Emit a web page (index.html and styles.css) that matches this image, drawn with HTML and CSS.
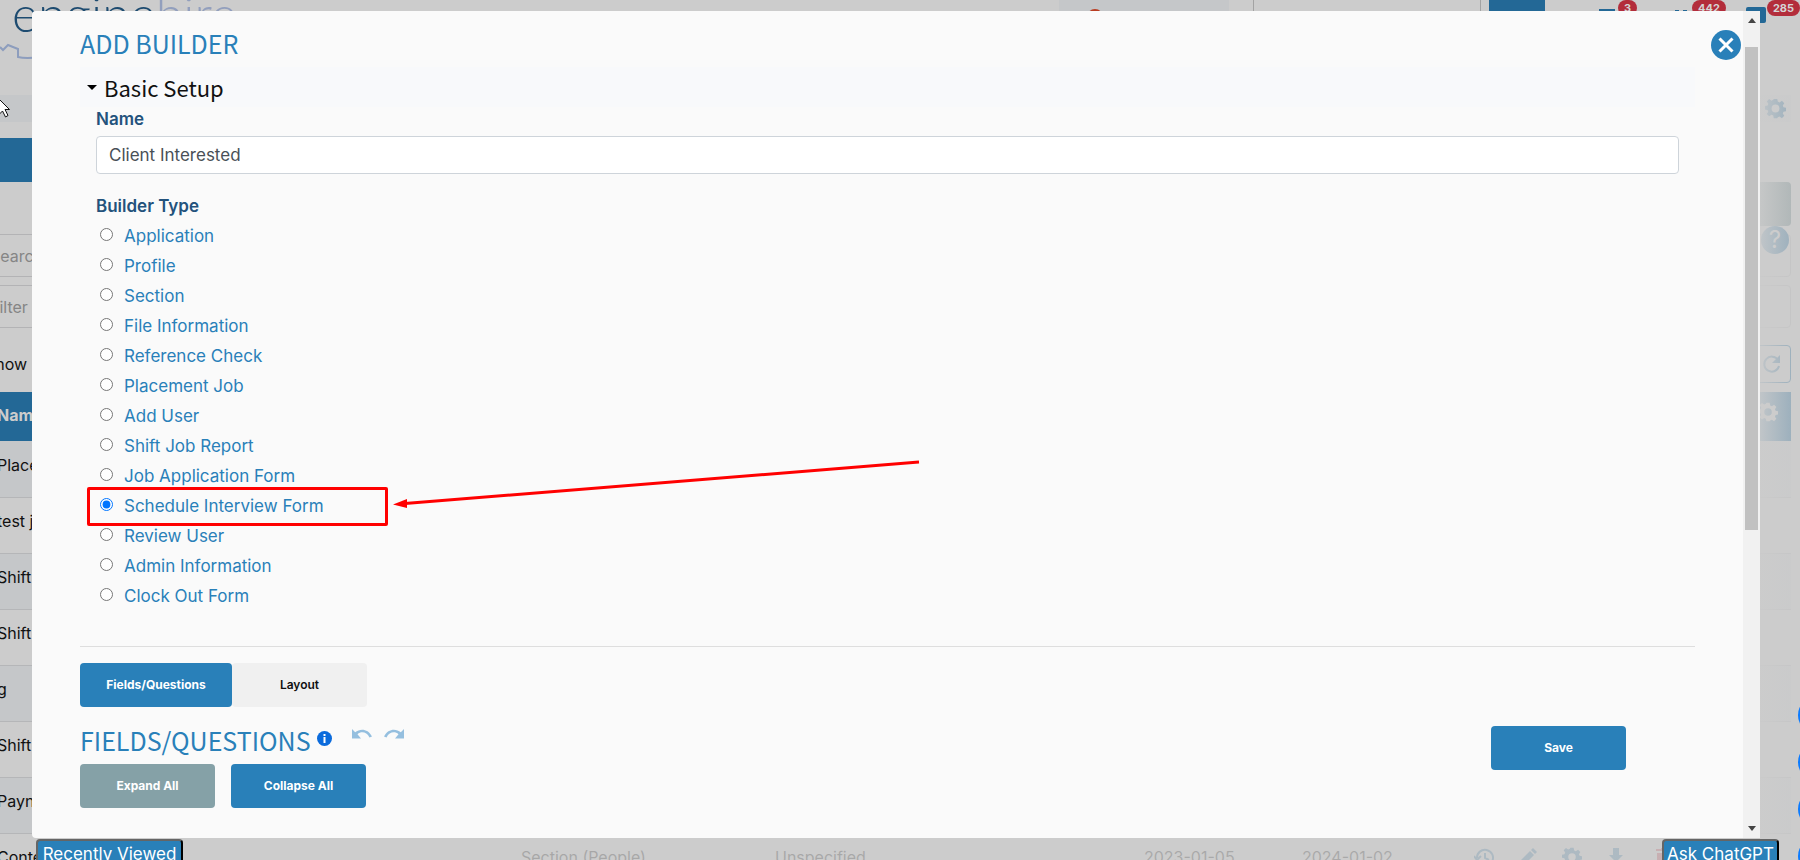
FILE: index.html
```html
<!DOCTYPE html>
<html lang="en">
<head>
<meta charset="utf-8">
<title>Enginehire - Add Builder</title>
<link rel="stylesheet" href="styles.css">
</head>
<body>
<svg class="defs" aria-hidden="true">
  <symbol id="gear" viewBox="0 0 24 24"><path fill="currentColor" fill-rule="evenodd" d="M10 1h4l.6 3.1 2 .9 2.700-1.800 2.700 2.800-1.700 2.600.8 2 3 .6v3.800l-3 .6-.8 2 1.700 2.600-2.700 2.800-2.700-1.800-2 .9L14 23h-4l-.6-3-2-.9-2.700 1.800L2 18.200l1.700-2.600-.8-2-2.900-.6V9.200l3-.6.8-2L2 4l2.700-2.800 2.700 1.800 2-.9zM12 7.500a4.500 4.500 0 1 0 0 9 4.500 4.500 0 0 0 0-9z"/></symbol>
</svg>

<div class="page">
  <header class="top">
    <div class="brand">
      <div class="logo"><span class="logo-dark">engine</span><span class="logo-light">hire</span></div>
      <svg class="skyline" width="40" height="20" viewBox="0 0 40 20" fill="none" stroke="#8d9dbd" stroke-width="2"><path d="M0 4l3 3 5-5 10 4v8q8 2 22 0"/></svg>
    </div>
    <div class="top-tools">
      <div class="notice">
        <svg width="170" height="16" viewBox="0 0 170 16"><circle cx="36" cy="15" r="8" fill="#b93d22"/><circle cx="36" cy="15" r="4" fill="#c5c7c9"/><path stroke="#b93d22" stroke-width="2" d="M58 10v6M100 10v6M108 10v6M127 10v6M142 10v6"/></svg>
      </div>
      <div class="top-field"></div>
      <button class="top-button" aria-label="Search"></button>
      <div class="alert alert-a"><svg width="16" height="16" viewBox="0 0 16 16"><path fill="#236896" d="M0 9h16v7H0z"/></svg><span class="badge">3</span></div>
      <div class="alert alert-b"><svg width="14" height="16" viewBox="0 0 14 16"><path fill="#236896" d="M1 10h4v6H1zM9 10h4v6H9z"/></svg><span class="badge">442</span></div>
      <div class="alert alert-c"><svg width="20" height="24" viewBox="0 0 20 24"><rect y="7" width="20" height="16" rx="2" fill="#236896"/></svg><span class="badge">285</span></div>
    </div>
  </header>

  <main class="workspace">
    <nav class="crumbs"><svg class="faint-icon" width="21" height="21"><use href="#gear"/></svg></nav>
    <div class="blue-bar"></div>
    <div class="action-row"><div class="green-button"></div><span class="help">?</span></div>
    <input class="filter" aria-label="Search" placeholder="Search">
    <select class="filter" aria-label="Filter by"><option>Filter by</option></select>
    <div class="show-row"><span>Show</span>
      <button class="refresh" aria-label="Refresh"><svg width="20" height="20" viewBox="0 0 20 20" fill="none" stroke="#236896" stroke-width="2"><path d="M16 6a7.500 7.500 0 1 0 1 6"/><path fill="#236896" stroke="none" d="M18 1v8h-8z"/></svg></button>
    </div>
    <table class="records">
      <colgroup><col class="c-name"><col class="c-type"><col class="c-status"><col class="c-date"><col class="c-date"><col></colgroup>
      <thead><tr><th>Name</th><th></th><th></th><th></th><th></th><th class="th-gear"><svg width="20" height="20"><use href="#gear"/></svg></th></tr></thead>
      <tbody>
        <tr><td>Place</td><td></td><td></td><td></td><td></td><td></td></tr>
        <tr><td>test j</td><td></td><td></td><td></td><td></td><td></td></tr>
        <tr><td>Shift</td><td></td><td></td><td></td><td></td><td></td></tr>
        <tr><td>Shift</td><td></td><td></td><td></td><td></td><td></td></tr>
        <tr><td>g</td><td></td><td></td><td></td><td></td><td></td></tr>
        <tr><td>Shift</td><td></td><td></td><td></td><td></td><td></td></tr>
        <tr><td>Payn</td><td></td><td></td><td></td><td></td><td></td></tr>
        <tr><td>Conte</td><td>Section (People)</td><td>Unspecified</td><td>2023-01-05</td><td>2024-01-02</td>
          <td><div class="row-icons">
            <svg width="20" height="20" viewBox="0 0 20 20" fill="none" stroke="currentColor" stroke-width="2"><path d="M3 11a8 8 0 1 1 3 6M0 9l3 4 4-4M11 6v5l4 2"/></svg>
            <svg width="20" height="20" viewBox="0 0 20 20" fill="currentColor"><path d="M2 14L12 4l4 4L6 18H2zM13 3l2-2 4 4-2 2z"/></svg>
            <svg width="20" height="20"><use href="#gear"/></svg>
            <svg width="20" height="20" viewBox="0 0 20 20" fill="currentColor"><path d="M7 1h6v7h4l-7 7-7-7h4zM3 17h14v2H3z"/></svg>
            <svg class="bin" width="20" height="20" viewBox="0 0 20 20" fill="currentColor"><path d="M2 2h5V1h6v1h5v2H2zM3 6h14v14H3z"/></svg>
          </div></td></tr>
      </tbody>
    </table>
    <div class="fade"></div>
  </main>
</div>

<button class="dock dock-left">Recently Viewed</button>
<button class="dock dock-right">Ask ChatGPT</button>
<div class="bubbles"><i></i><i></i><i></i><i></i></div>
<svg class="pointer" width="12" height="20" viewBox="0 0 12 20"><path fill="#fff" stroke="#111" d="M-3-2L9.500 10.500H5l3 6-2.500 1.500-3-6-4 4z"/></svg>

<div class="modal" role="dialog" aria-labelledby="dialog-title">
  <form class="modal-body">
    <h2 class="title" id="dialog-title">ADD BUILDER</h2>
    <button type="button" class="close" aria-label="Close"><svg width="30" height="30" viewBox="0 0 30 30"><circle cx="15" cy="15" r="15" fill="#2980b9"/><path d="M8.500 8.500l13 13M21.500 8.500l-13 13" stroke="#fff" stroke-width="3"/></svg></button>
    <h3 class="section-bar"><svg width="10" height="5" viewBox="0 0 10 5"><path d="M0 0h10L5 5z"/></svg>Basic Setup</h3>
    <div class="setup">
      <label class="label" for="name">Name</label>
      <input class="text-input" id="name" type="text" value="Client Interested">
      <fieldset class="types">
        <legend class="label">Builder Type</legend>
        <label class="option"><input type="radio" name="type">Application</label>
        <label class="option"><input type="radio" name="type">Profile</label>
        <label class="option"><input type="radio" name="type">Section</label>
        <label class="option"><input type="radio" name="type">File Information</label>
        <label class="option"><input type="radio" name="type">Reference Check</label>
        <label class="option"><input type="radio" name="type">Placement Job</label>
        <label class="option"><input type="radio" name="type">Add User</label>
        <label class="option"><input type="radio" name="type">Shift Job Report</label>
        <label class="option"><input type="radio" name="type">Job Application Form</label>
        <label class="option"><input type="radio" name="type" checked>Schedule Interview Form
          <span class="mark"></span>
          <svg class="arrow" width="530" height="52" viewBox="0 0 530 52"><path d="M12 45.500L526 4" stroke="#f00" stroke-width="3"/><path d="M0 46.500L14 41v9z" fill="#f00"/></svg>
        </label>
        <label class="option"><input type="radio" name="type">Review User</label>
        <label class="option"><input type="radio" name="type">Admin Information</label>
        <label class="option"><input type="radio" name="type">Clock Out Form</label>
      </fieldset>
    </div>
    <hr class="rule">
    <div class="tabs">
      <button type="button" class="btn tab-wide">Fields/Questions</button>
      <button type="button" class="btn btn-plain">Layout</button>
    </div>
    <div class="fields">
      <div>
        <div class="fields-head">
          <h2 class="title">FIELDS/QUESTIONS</h2>
          <svg class="info" width="15" height="15" viewBox="0 0 15 15"><circle cx="7.500" cy="7.500" r="7.500" fill="#0b6bdc"/><path fill="#fff" d="M6.500 3h2v2h-2zM6.500 6h2v6h-2z"/></svg>
          <button type="button" class="icon-btn undo" aria-label="Undo"><svg width="20" height="10" viewBox="0 0 20 10"><path fill="#95bfdf" d="M0 0l3.200 3.200C8-.7 16-.7 20 7.500l-2.500.9C14.500 2.500 9 2.200 5.500 5.200L9 9.500H0z"/></svg></button>
          <button type="button" class="icon-btn" aria-label="Redo"><svg width="20" height="10" viewBox="0 0 20 10"><path fill="#95bfdf" d="M20 0l-3.200 3.200C12-.7 4-.7 0 7.500l2.500.9C5.500 2.500 11 2.200 14.500 5.200L11 9.500h9z"/></svg></button>
        </div>
        <div class="pair">
          <button type="button" class="btn btn-muted">Expand All</button>
          <button type="button" class="btn">Collapse All</button>
        </div>
      </div>
      <button type="button" class="btn save">Save</button>
    </div>
  </form>
  <div class="scroll">
    <svg width="10" height="5" viewBox="0 0 10 5"><path fill="#444" d="M1 5h8L5 0z"/></svg>
    <div class="track"><div class="thumb"></div></div>
    <svg width="10" height="5" viewBox="0 0 10 5"><path fill="#444" d="M1 0h8L5 5z"/></svg>
  </div>
</div>
</body>
</html>
```
FILE: styles.css
```css
* { box-sizing: border-box; }
body {
  margin: 0;
  height: 100vh;
  overflow: hidden;
  position: relative;
  background: #ccc;
  font: 16px/24px Inter, "Open Sans", sans-serif;
  color: #111;
}
button, input, select { font: inherit; }
.defs { position: absolute; width: 0; height: 0; }

/* Dimmed page behind the dialog */
.page { height: 100vh; overflow: hidden; }
.top { display: flex; justify-content: space-between; height: 95px; }
.brand { padding-left: 12px; }
.logo { font: 300 50px/60px Lato, sans-serif; margin-top: -17px; white-space: nowrap; }
.logo-dark { color: #1d4b70; }
.logo-light { color: #929fbd; }
.skyline { display: block; margin: 0 0 0 -12px; }
.top-tools { display: flex; align-items: flex-start; }
.notice { width: 170px; height: 30px; background: #c5c7c9; margin-right: 24px; }
.top-field { width: 228px; height: 30px; border: 1px solid #a3a3a3; border-top: 0; margin-right: 8px; }
.top-button { width: 56px; height: 30px; border: 0; background: #236896; margin-right: 54px; }
.alert { display: flex; align-items: flex-start; }
.alert-a { gap: 3px; margin-right: 37px; }
.alert-b { gap: 4px; margin-right: 20px; }
.alert-c { gap: 1px; }
.badge {
  padding: 0 6px;
  border-radius: 8px;
  background: #b32d3b;
  color: #d5d5d5;
  font-size: 11px;
  line-height: 16px;
  font-weight: 700;
}
.workspace { position: relative; margin: 0 9px 0 -19px; }
.crumbs { height: 27px; padding-right: 5px; background: #c5c7c9; display: flex; justify-content: flex-end; align-items: center; }
.faint-icon { color: #236896; }
.blue-bar { width: 400px; height: 44px; margin-top: 16px; background: #236896; }
.action-row { position: relative; height: 52px; display: flex; justify-content: flex-end; }
.green-button { width: 135px; height: 44px; border-radius: 4px; background: #6b8386; }
.help {
  position: absolute;
  right: 2px;
  top: 44px;
  width: 28px;
  height: 28px;
  border-radius: 50%;
  background: #236896;
  color: #ccc;
  font-size: 24px;
  line-height: 28px;
  text-align: center;
}
.filter {
  display: block;
  width: 100%;
  height: 43px;
  margin-bottom: 8px;
  padding: 0 8px;
  border: 1px solid #b3b3b5;
  border-radius: 4px;
  background: transparent;
  color: #858585;
  appearance: none;
}
.filter::placeholder { color: #858585; }
.show-row { display: flex; justify-content: space-between; align-items: center; height: 38px; margin: 17px 0 9px; padding-left: 4px; }
.refresh { width: 38px; height: 38px; padding: 0; border: 1px solid #236896; border-radius: 4px; background: transparent; display: grid; place-items: center; }
.records { width: 100%; border-collapse: collapse; table-layout: fixed; }
.c-name { width: 524px; }
.c-type { width: 254px; }
.c-status { width: 369px; }
.c-date { width: 158px; }
.records th { height: 49px; padding: 0 16px 4px; background: #236896; color: #ccc; font-weight: 700; text-align: left; white-space: nowrap; }
.records .th-gear { text-align: right; padding-right: 13px; }
.records td { height: 56px; padding: 0 16px 8px; border-bottom: 1px solid #b5b6b8; white-space: nowrap; }
.records tbody tr:nth-child(odd) { background: #c5c7c9; }
.row-icons { display: flex; gap: 24px; color: #236896; padding-left: 14px; }
.bin { color: #b32d3b; margin-left: 4px; }
.fade {
  position: absolute;
  inset: 0;
  background: linear-gradient(to right, transparent 60px, rgba(204, 204, 204, .8) 500px, rgba(204, 204, 204, .82) 94%, rgba(204, 204, 204, .97) 98%, rgba(204, 204, 204, .72) 100%);
}

/* Items floating above the page */
.dock {
  position: absolute;
  bottom: -8px;
  height: 29px;
  padding: 0;
  border: 2px outset #111;
  border-radius: 4px;
  background: #2980b9;
  color: #fff;
  font-size: 17px;
  line-height: 24px;
  white-space: nowrap;
}
.dock-left { left: 36px; width: 147px; }
.dock-right { right: 21px; width: 117px; }
.bubbles { position: absolute; top: 697px; right: -34px; display: grid; gap: 11px; }
.bubbles i { width: 36px; height: 36px; border-radius: 50%; background: #0b7bff; }
.pointer { position: absolute; left: 0; top: 99px; }

/* Dialog */
.modal {
  position: absolute;
  inset: 11px 40px 22px 32px;
  display: flex;
  background: #fafafa;
  border-radius: 4px 0 0 4px;
  overflow: hidden;
}
.modal-body { position: relative; flex: 1; padding: 14px 48px 0; overflow: hidden; }
.title { margin: 0; color: #2980b9; font: 400 25px/36px "Noto Sans CJK SC", sans-serif; }
.close { position: absolute; top: 19px; right: 2px; padding: 0; border: 0; background: none; line-height: 0; }
.section-bar {
  display: flex;
  align-items: center;
  gap: 7px;
  height: 40px;
  margin: 6px 0 0;
  padding-left: 7px;
  background: #f8f9fb;
  color: #111;
  font: 400 22px/40px "Noto Sans CJK SC", sans-serif;
}
.setup { padding: 0 16px; }
.label { display: block; padding: 0; color: #23527c; font-size: 17px; font-weight: 600; line-height: 24px; }
.text-input {
  display: block;
  width: 100%;
  height: 38px;
  margin: 5px 0 20px;
  padding: 0 12px;
  border: 1px solid #ced4da;
  border-radius: 4px;
  background: #fff;
  color: #495057;
  font-size: 17px;
}
.types { margin: 0; padding: 0; border: 0; }
.types .label { margin-bottom: 3px; }
.option { position: relative; display: flex; align-items: center; height: 30px; color: #2980b9; font-size: 17px; }
.option input { width: 13px; height: 13px; margin: 0 11px 3px 4px; }
.mark { position: absolute; left: -9px; top: -4px; width: 301px; height: 39px; border: 3px solid #f00; border-radius: 2px; }
.arrow { position: absolute; left: 297px; top: -33px; }
.rule { height: 1px; margin: 35px 0 16px; border: 0; background: #dedede; }
.tabs { display: flex; }
.btn {
  width: 135px;
  height: 44px;
  padding: 0;
  border: 0;
  border-radius: 4px;
  background: #2980b9;
  color: #fff;
  font-size: 12px;
  font-weight: 700;
}
.tab-wide { width: 152px; }
.btn-plain { background: #f0f0f0; color: #111; font-weight: 600; }
.btn-muted { background: #85a1a7; }
.fields { display: flex; justify-content: space-between; align-items: flex-start; padding-top: 15px; }
.fields-head { display: flex; align-items: center; height: 36px; margin-bottom: 6px; }
.info { margin: 0 0 4px 6px; }
.icon-btn { padding: 0; border: 0; background: none; line-height: 0; margin: 0 0 12px 12px; }
.undo { margin-left: 20px; }
.pair { display: flex; gap: 16px; }
.save { margin: 4px 69px 0 0; }
.scroll { width: 17px; display: flex; flex-direction: column; align-items: center; padding: 7px 0; background: #f1f1f1; }
.track { flex: 1; width: 13px; margin: 24px 0 12px; }
.thumb { height: 63%; background: #c1c1c1; }
```
